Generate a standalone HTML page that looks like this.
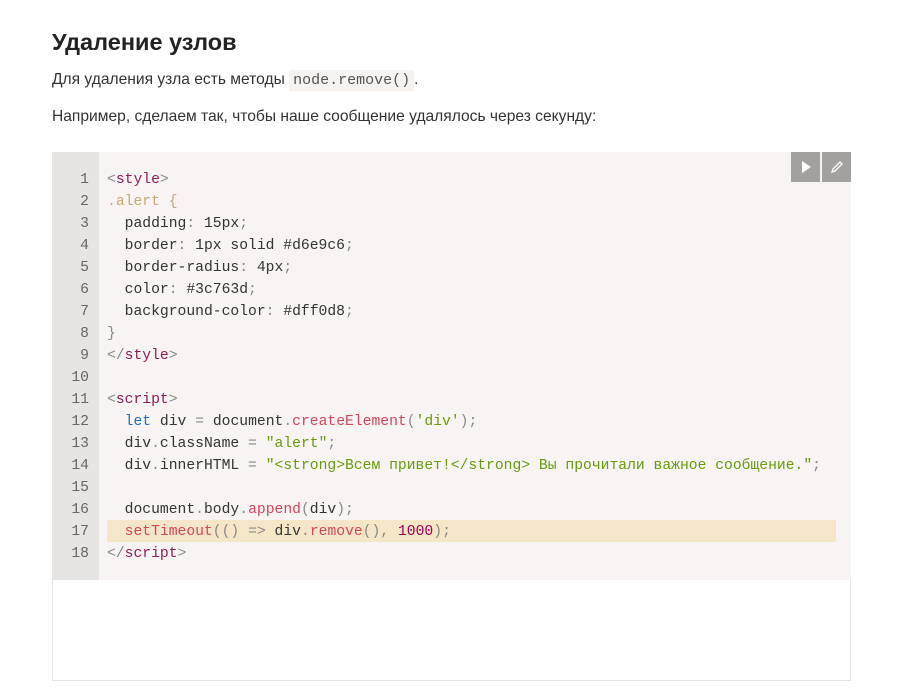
<!DOCTYPE html>
<html><head><meta charset="utf-8"><style>
body{margin:0;background:#fff;width:907px;height:695px;overflow:hidden;font-family:"Liberation Sans","DejaVu Sans",sans-serif;color:#333}
h2{position:absolute;left:52px;top:27px;margin:0;font-size:23.5px;font-weight:bold;color:#222;line-height:30px}
.p{position:absolute;left:52px;font-size:15.6px;line-height:20px;color:#333}
code.i{font-family:"Liberation Mono",monospace;font-size:15px;background:#f5f2f0;padding:2px 4px;color:#555}
.code{position:absolute;left:52px;top:152px;width:799px;height:428px;background:#f7f4f3}
.gut{position:absolute;left:0;top:0;width:47px;height:428px;background:#e7e5e3}
.hl{position:absolute;left:55px;top:368px;width:729px;height:22px;background:#f6e6c8}
pre{position:absolute;margin:0;top:17px;font-family:"Liberation Mono",monospace;font-size:14.7px;line-height:22px;color:#333}
.ln{left:0;width:37px;text-align:right;color:#666}
.src{left:55px}
.t{color:#8c1c5a}.s{color:#6a9a0e}.f{color:#d0465a}.k{color:#1f6ec0}.n{color:#990055}.c{color:#c8a878}.pu{color:#888}
.btn{position:absolute;top:152px;width:29px;height:30px;background:#a3a19f}
.res{position:absolute;left:52px;top:580px;width:797px;height:100px;border:1px solid #e6e4e3;border-top:none;background:#fff}
</style></head><body>
<h2>Удаление узлов</h2>
<div class="p" style="top:70px">Для удаления узла есть методы <code class="i">node.remove()</code>.</div>
<div class="p" style="top:107px">Например, сделаем так, чтобы наше сообщение удалялось через секунду:</div>
<div class="code"><div class="gut"></div><div class="hl"></div>
<pre class="ln">1
2
3
4
5
6
7
8
9
10
11
12
13
14
15
16
17
18</pre>
<pre class="src"><span class="pu">&lt;</span><span class="t">style</span><span class="pu">&gt;</span>
<span class="c">.alert {</span>
  padding<span class="pu">:</span> 15px<span class="pu">;</span>
  border<span class="pu">:</span> 1px solid #d6e9c6<span class="pu">;</span>
  border-radius<span class="pu">:</span> 4px<span class="pu">;</span>
  color<span class="pu">:</span> #3c763d<span class="pu">;</span>
  background-color<span class="pu">:</span> #dff0d8<span class="pu">;</span>
<span class="pu">}</span>
<span class="pu">&lt;/</span><span class="t">style</span><span class="pu">&gt;</span>

<span class="pu">&lt;</span><span class="t">script</span><span class="pu">&gt;</span>
  <span class="k">let</span> div <span class="pu">=</span> document<span class="pu">.</span><span class="f">createElement</span><span class="pu">(</span><span class="s">'div'</span><span class="pu">);</span>
  div<span class="pu">.</span>className <span class="pu">=</span> <span class="s">"alert"</span><span class="pu">;</span>
  div<span class="pu">.</span>innerHTML <span class="pu">=</span> <span class="s">"&lt;strong&gt;Всем привет!&lt;/strong&gt; Вы прочитали важное сообщение."</span><span class="pu">;</span>

  document<span class="pu">.</span>body<span class="pu">.</span><span class="f">append</span><span class="pu">(</span>div<span class="pu">);</span>
  <span class="f">setTimeout</span><span class="pu">((</span><span class="pu">)</span> <span class="pu">=&gt;</span> div<span class="pu">.</span><span class="f">remove</span><span class="pu">(),</span> <span class="n">1000</span><span class="pu">);</span>
<span class="pu">&lt;/</span><span class="t">script</span><span class="pu">&gt;</span></pre>
</div>
<div class="btn" style="left:791px"><svg width="29" height="30"><path d="M11 9 L20 15 L11 21Z" fill="#fff"/></svg></div>
<div class="btn" style="left:822px"><svg width="29" height="30"><path d="M10 20 L11 17 L18 10 L20 12 L13 19 Z" fill="none" stroke="#fff" stroke-width="1.3"/></svg></div>
<div class="res"></div>
</body></html>
